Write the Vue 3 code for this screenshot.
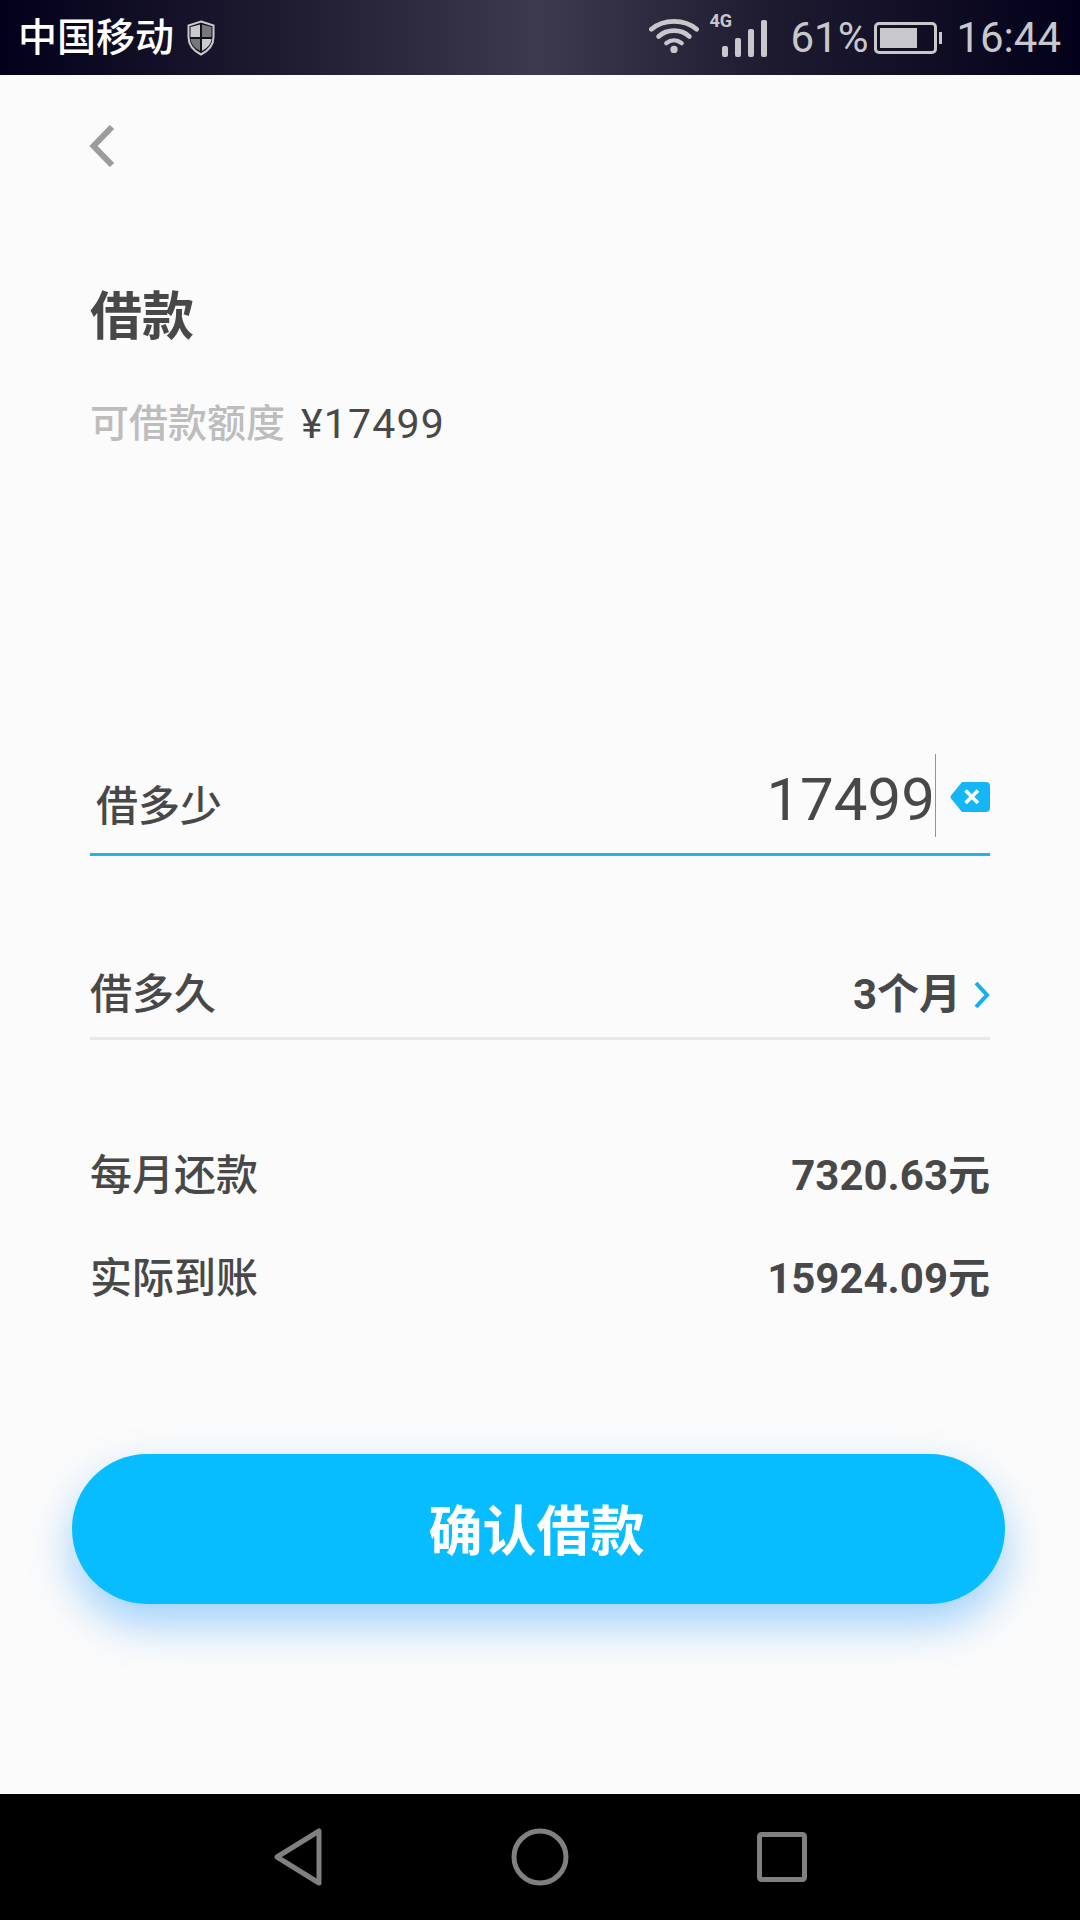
<script setup>
const rows = [
  { label: '每月还款', value: '7320.63元' },
  { label: '实际到账', value: '15924.09元' }
]
</script>

<template>
  <div class="page">
    <div class="status-bar">
      <div class="status-left">
        <span class="carrier">中国移动</span>
        <svg class="shield" width="28" height="36" viewBox="0 0 28 36">
          <path d="M14 1.5 L26.5 5.5 V17 C26.5 25 21 31 14 34.5 C7 31 1.5 25 1.5 17 V5.5 Z" fill="#111" stroke="#c9c9d2" stroke-width="2"/>
          <path d="M3.5 7 L13 4.5 V17 H3.5 Z" fill="#c9c9d2"/>
          <path d="M15 4.5 L24.5 7 V17 H15 Z" fill="#77777f"/>
          <path d="M3.5 19 H13 V31 C8 28 4 24.5 3.5 19 Z" fill="#77777f"/>
          <path d="M15 19 H24.5 C24 24.5 20 28 15 31 Z" fill="#c9c9d2"/>
        </svg>
      </div>
      <div class="status-right">
        <svg class="wifi" width="50" height="38" viewBox="0 0 52 38">
          <path d="M2.5 13 C15 2 37 2 49.5 13" fill="none" stroke="#c8c8cc" stroke-width="5" stroke-linecap="round"/>
          <path d="M10 20.5 C19 12.5 33 12.5 42 20.5" fill="none" stroke="#c8c8cc" stroke-width="5" stroke-linecap="round"/>
          <path d="M18 27.5 C23 23.5 29 23.5 34 27.5" fill="none" stroke="#c8c8cc" stroke-width="4.5" stroke-linecap="round"/>
          <circle cx="26" cy="34" r="3.8" fill="#c8c8cc"/>
        </svg>
        <div class="signal">
          <span class="net">4G</span>
          <div class="bars">
            <i class="b1"></i><i class="b2"></i><i class="b3"></i><i class="b4"></i>
          </div>
        </div>
        <span class="percent">61%</span>
        <div class="battery"><div class="battery-level"></div></div>
        <span class="clock">16:44</span>
      </div>
    </div>

    <div class="top-nav">
      <svg width="26" height="42" viewBox="0 0 26 42">
        <path d="M23 2 L4.5 21 L23 40" fill="none" stroke="#9c9c9c" stroke-width="6"/>
      </svg>
    </div>

    <div class="content">
      <h1 class="title">借款</h1>
      <div class="limit">
        <span class="limit-label">可借款额度</span>
        <span class="limit-value">¥17499</span>
      </div>

      <div class="amount-row">
        <span class="amount-label">借多少</span>
        <div class="amount-input">
          <span class="amount-value">17499</span>
          <i class="cursor"></i>
          <svg class="clear" width="40" height="30" viewBox="0 0 40 30">
            <path d="M12 0 H36 C38.5 0 40 1.5 40 4 V26 C40 28.5 38.5 30 36 30 H12 L1 16.5 Q0 15 1 13.5 Z" fill="#14b6f5"/>
            <path d="M15.5 8.5 L28 21 M28 8.5 L15.5 21" stroke="#fff" stroke-width="3.6"/>
          </svg>
        </div>
      </div>

      <div class="term-row">
        <span>借多久</span>
        <div class="term-value">
          <b>3个月</b>
          <svg width="16" height="28" viewBox="0 0 16 28">
            <path d="M2 2 L13 14 L2 26" fill="none" stroke="#14b0ee" stroke-width="4"/>
          </svg>
        </div>
      </div>

      <div class="summary">
        <div class="summary-row" v-for="row in rows" :key="row.label">
          <span>{{ row.label }}</span>
          <b>{{ row.value }}</b>
        </div>
      </div>

      <button class="confirm">确认借款</button>
    </div>

    <div class="nav-bar">
      <svg width="50" height="58" viewBox="0 0 50 58">
        <path d="M46 3 V55 L4 29 Z" fill="none" stroke="#808080" stroke-width="5" stroke-linejoin="round"/>
      </svg>
      <svg width="58" height="58" viewBox="0 0 58 58">
        <circle cx="29" cy="29" r="26" fill="none" stroke="#808080" stroke-width="5"/>
      </svg>
      <svg width="50" height="50" viewBox="0 0 50 50">
        <rect x="2.5" y="2.5" width="45" height="45" rx="2" fill="none" stroke="#808080" stroke-width="5"/>
      </svg>
    </div>
  </div>
</template>

<style>
html, body {
  margin: 0;
  background: #fbfbfb;
}
</style>

<style scoped>
.page {
  width: 1080px;
  height: 1920px;
  display: flex;
  flex-direction: column;
  background: #fbfbfb;
  color: #484848;
  font-family: Roboto, "Noto Sans CJK SC", sans-serif;
  overflow: hidden;
}

.status-bar {
  height: 75px;
  flex: none;
  display: flex;
  justify-content: space-between;
  align-items: center;
  padding: 0 19px 0 18px;
  box-sizing: border-box;
  background: linear-gradient(90deg, #03011a 0%, #1d1a30 25%, #3d3a50 50%, #1d1a30 72%, #03011a 100%);
}

.status-left {
  display: flex;
  align-items: center;
  gap: 13px;
}

.carrier {
  color: #fff;
  font-size: 39px;
  line-height: 44px;
  font-weight: 500;
}

.status-right {
  display: flex;
  align-items: center;
  color: #c8c8cc;
}

.wifi {
  margin-top: -5px;
}

.signal {
  position: relative;
  width: 58px;
  height: 50px;
  margin-left: 10px;
}

.net {
  position: absolute;
  left: 0;
  top: -2px;
  font-size: 18px;
  font-weight: 700;
  line-height: 20px;
}

.bars {
  position: absolute;
  right: 0;
  bottom: 6px;
  display: flex;
  align-items: flex-end;
  gap: 6.5px;
}

.bars i {
  display: block;
  width: 6.5px;
  border-radius: 2px;
  background: #c8c8cc;
}

.bars .b1 { height: 11px; }
.bars .b2 { height: 19px; }
.bars .b3 { height: 28px; }
.bars .b4 { height: 37px; }

.percent {
  margin-left: 23px;
  font-size: 42px;
  font-weight: 400;
}

.battery {
  position: relative;
  width: 63px;
  height: 32px;
  margin-left: 6px;
  padding: 3px;
  box-sizing: border-box;
  border: 3px solid #c8c8cc;
  border-radius: 5px;
}

.battery::after {
  content: "";
  position: absolute;
  right: -8px;
  top: 7px;
  width: 3px;
  height: 12px;
  background: #c8c8cc;
}

.battery-level {
  width: 72%;
  height: 100%;
  background: #c8c8cc;
}

.clock {
  margin-left: 19px;
  font-size: 42px;
  font-weight: 400;
}

.top-nav {
  height: 145px;
  flex: none;
  display: flex;
  align-items: center;
  padding-left: 89px;
  padding-bottom: 2px;
  box-sizing: border-box;
  border-bottom: 1px solid #f8f8f8;
}

.content {
  flex: 1;
  padding: 0 90px;
  position: relative;
}

.title {
  margin: 62px 0 0;
  font-size: 52px;
  line-height: 72px;
  font-weight: 700;
}

.limit {
  margin-top: 43px;
  display: flex;
  align-items: center;
  gap: 16px;
  line-height: 54px;
}

.limit-label {
  font-size: 39px;
  color: #bdbdbd;
  font-weight: 500;
}

.limit-value {
  font-size: 41px;
  letter-spacing: 1.2px;
}

.amount-row {
  margin-top: 300px;
  height: 102px;
  display: flex;
  justify-content: space-between;
  align-items: flex-end;
  border-bottom: 3px solid #1db5ea;
  padding-left: 6px;
}

.amount-label {
  font-size: 42px;
  line-height: 62px;
  margin-bottom: 15px;
  font-weight: 500;
}

.amount-input {
  display: flex;
  align-items: flex-end;
  height: 100%;
}

.amount-value {
  font-size: 60px;
  line-height: 70px;
  margin-bottom: 18px;
}

.cursor {
  display: block;
  width: 1px;
  height: 83px;
  margin-bottom: 16px;
  background: #5fa7c0;
}

.clear {
  margin-left: 14px;
  margin-bottom: 41px;
}

.term-row {
  margin-top: 108px;
  height: 73px;
  display: flex;
  justify-content: space-between;
  align-items: flex-start;
  font-size: 42px;
  line-height: 62px;
  font-weight: 500;
  border-bottom: 3px solid #e8e8e8;
}

.term-value {
  display: flex;
  align-items: center;
  gap: 13px;
  font-size: 42px;
}

.summary {
  margin-top: 105px;
  display: flex;
  flex-direction: column;
  gap: 41px;
}

.summary-row {
  display: flex;
  justify-content: space-between;
  font-size: 42px;
  line-height: 62px;
  font-weight: 500;
}

.confirm {
  display: block;
  width: 933px;
  height: 150px;
  margin: 144px 0 0 -18px;
  padding: 0 4px 4px 0;
  border: none;
  border-radius: 75px;
  background: #08bdff;
  color: #fff;
  font-family: inherit;
  font-size: 54px;
  font-weight: 700;
  box-shadow: 0 20px 44px rgba(30, 150, 250, 0.42);
}

.nav-bar {
  height: 126px;
  flex: none;
  background: #000;
  display: flex;
  justify-content: center;
  align-items: center;
  gap: 188px;
}
</style>
